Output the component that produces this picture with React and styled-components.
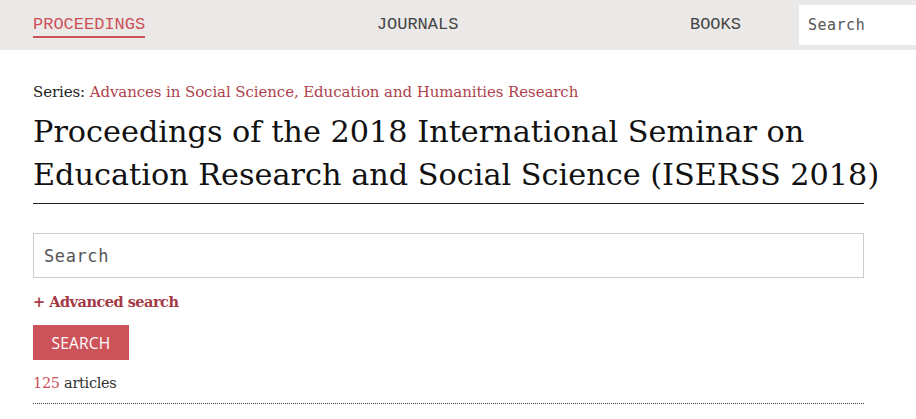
import React from 'react';
import styled, { createGlobalStyle } from 'styled-components';

const GlobalStyle = createGlobalStyle`
  body {
    margin: 0;
    background: #fff;
    font-family: 'DejaVu Serif', serif;
  }
`

const Header = styled.header`
  display: flex;
  align-items: center;
  height: 50px;
  background: #ebe9e7;
  padding-left: 33px;
  overflow: hidden;
`

const Nav = styled.nav`
  display: flex;
  flex-shrink: 0;
  justify-content: space-between;
  align-items: center;
  width: 708px;
`

const NavLink = styled.a`
  font-family: 'Liberation Mono', monospace;
  font-size: 17px;
  color: ${props => props.active ? '#cd5059' : '#444'};
  text-decoration: none;
  padding-bottom: 2px;
  border-bottom: ${props => props.active ? '2px solid #cd5059' : '2px solid transparent'};
  margin-top: 2px;
`

const HeaderSearch = styled.input`
  flex-shrink: 0;
  margin-left: 58px;
  width: 140px;
  height: 40px;
  box-sizing: border-box;
  border: none;
  outline: none;
  background: #fff;
  padding: 0 9px;
  font-family: 'DejaVu Sans Mono', monospace;
  font-size: 15px;
  letter-spacing: 0.5px;
  &::placeholder { color: #555; }
`

const Main = styled.main`
  width: 831px;
  padding: 33px 0 0 33px;
`

const Series = styled.div`
  font-size: 15px;
  color: #222;
  letter-spacing: -0.1px;
  a {
    color: #b0414c;
    text-decoration: none;
  }
`

const Title = styled.h1`
  margin: 9px -20px 0 0;
  font-weight: normal;
  font-size: 30.3px;
  line-height: 43px;
  color: #111;
`

const Divider = styled.div`
  margin-top: 7px;
  border-top: 1px solid #222;
`

const SearchField = styled.input`
  display: block;
  margin-top: 29px;
  width: 100%;
  height: 45px;
  box-sizing: border-box;
  border: 1px solid #ccc;
  padding: 0 10px;
  font-family: 'DejaVu Sans Mono', monospace;
  font-size: 17px;
  letter-spacing: 0.6px;
  outline: none;
  &::placeholder { color: #555; }
`

const Advanced = styled.a`
  display: inline-block;
  margin-top: 15px;
  font-weight: bold;
  font-size: 14.5px;
  color: #a33a45;
  text-decoration: none;
  letter-spacing: -0.5px;
`

const SearchButton = styled.button`
  display: block;
  margin-top: 14px;
  width: 96px;
  height: 35px;
  border: none;
  background: #cd535a;
  color: #fff;
  font-family: 'Open Sans', sans-serif;
  font-size: 15.5px;
  letter-spacing: 0.2px;
`

const Count = styled.div`
  margin-top: 15px;
  font-size: 14.5px;
  color: #333;
  letter-spacing: -0.3px;
  padding-bottom: 12px;
  border-bottom: 1px dotted #444;
  span { color: #cd5059; }
`

function App() {
  return (
    <>
      <GlobalStyle />
      <Header>
        <Nav>
          <NavLink href="#" active>PROCEEDINGS</NavLink>
          <NavLink href="#">JOURNALS</NavLink>
          <NavLink href="#">BOOKS</NavLink>
        </Nav>
        <HeaderSearch placeholder="Search" />
      </Header>
      <Main>
        <Series>
          Series: <a href="#">Advances in Social Science, Education and Humanities Research</a>
        </Series>
        <Title>
          Proceedings of the 2018 International Seminar on Education Research and Social Science (ISERSS 2018)
        </Title>
        <Divider />
        <SearchField placeholder="Search" />
        <Advanced href="#">+ Advanced search</Advanced>
        <SearchButton>SEARCH</SearchButton>
        <Count><span>125</span> articles</Count>
      </Main>
    </>
  );
}

export default App;
